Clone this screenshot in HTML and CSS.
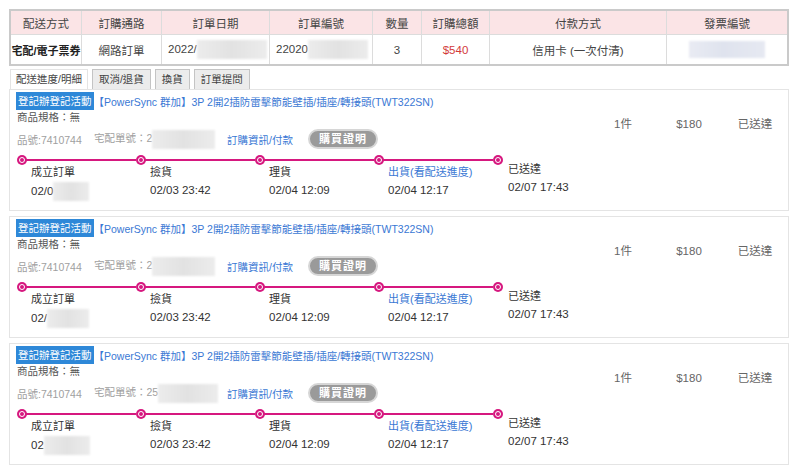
FILE: index.html
```html
<!DOCTYPE html>
<html lang="zh-Hant">
<head>
  <meta charset="UTF-8" />
  <title>訂單明細</title>
  <link rel="stylesheet" href="styles.css">
</head>
<body>
  <div class="page">
    <table class="summary">
      <tr>
        <th class="c1">配送方式</th>
        <th class="c2">訂購通路</th>
        <th class="c3">訂單日期</th>
        <th class="c4">訂單編號</th>
        <th class="c5">數量</th>
        <th class="c6">訂購總額</th>
        <th class="c7">付款方式</th>
        <th class="c8">發票編號</th>
      </tr>
      <tr>
        <td class="strong">宅配/電子票券</td>
        <td>網路訂單</td>
        <td class="left">2022/<span class="blur w70"></span></td>
        <td class="left">22020<span class="blur w60"></span></td>
        <td>3</td>
        <td class="price">$540</td>
        <td>信用卡 (一次付清)</td>
        <td><span class="blur invoice"></span></td>
      </tr>
    </table>

    <ul class="tabs">
      <li class="tab active">配送進度/明細</li>
      <li class="tab">取消/退貨</li>
      <li class="tab">換貨</li>
      <li class="tab">訂單提問</li>
    </ul>

    <div class="card">
      <div class="item">
        <div class="title"><span class="badge">登記辦登記活動</span><a class="name">【PowerSync 群加】3P 2開2插防雷擊節能壁插/插座/轉接頭(TWT322SN)</a></div>
        <div class="spec">商品規格：無</div>
        <div class="info">
          <span class="sku">品號:7410744</span>
          <span class="ship">宅配單號：2<span class="blur w63"></span></span>
          <a class="link">訂購資訊/付款</a>
          <span class="btn">購買證明</span>
        </div>
        <div class="steps">
          <div class="step"><div class="head"><i class="dot"></i><i class="seg"></i></div><div class="label">成立訂單</div><div class="time">02/0<span class="blur w36"></span></div></div>
          <div class="step"><div class="head"><i class="dot"></i><i class="seg"></i></div><div class="label">撿貨</div><div class="time">02/03 23:42</div></div>
          <div class="step"><div class="head"><i class="dot"></i><i class="seg"></i></div><div class="label">理貨</div><div class="time">02/04 12:09</div></div>
          <div class="step"><div class="head"><i class="dot"></i><i class="seg"></i></div><div class="label link">出貨(看配送進度)</div><div class="time">02/04 12:17</div></div>
          <div class="step last"><div class="head"><i class="dot"></i></div><div class="label">已送達</div><div class="time">02/07 17:43</div></div>
        </div>
      </div>
      <div class="meta"><span>1件</span><span>$180</span><span>已送達</span></div>
    </div>

    <div class="card">
      <div class="item">
        <div class="title"><span class="badge">登記辦登記活動</span><a class="name">【PowerSync 群加】3P 2開2插防雷擊節能壁插/插座/轉接頭(TWT322SN)</a></div>
        <div class="spec">商品規格：無</div>
        <div class="info">
          <span class="sku">品號:7410744</span>
          <span class="ship">宅配單號：2<span class="blur w63"></span></span>
          <a class="link">訂購資訊/付款</a>
          <span class="btn">購買證明</span>
        </div>
        <div class="steps">
          <div class="step"><div class="head"><i class="dot"></i><i class="seg"></i></div><div class="label">成立訂單</div><div class="time">02/<span class="blur w40"></span></div></div>
          <div class="step"><div class="head"><i class="dot"></i><i class="seg"></i></div><div class="label">撿貨</div><div class="time">02/03 23:42</div></div>
          <div class="step"><div class="head"><i class="dot"></i><i class="seg"></i></div><div class="label">理貨</div><div class="time">02/04 12:09</div></div>
          <div class="step"><div class="head"><i class="dot"></i><i class="seg"></i></div><div class="label link">出貨(看配送進度)</div><div class="time">02/04 12:17</div></div>
          <div class="step last"><div class="head"><i class="dot"></i></div><div class="label">已送達</div><div class="time">02/07 17:43</div></div>
        </div>
      </div>
      <div class="meta"><span>1件</span><span>$180</span><span>已送達</span></div>
    </div>

    <div class="card">
      <div class="item">
        <div class="title"><span class="badge">登記辦登記活動</span><a class="name">【PowerSync 群加】3P 2開2插防雷擊節能壁插/插座/轉接頭(TWT322SN)</a></div>
        <div class="spec">商品規格：無</div>
        <div class="info">
          <span class="sku">品號:7410744</span>
          <span class="ship">宅配單號：25<span class="blur w60"></span></span>
          <a class="link">訂購資訊/付款</a>
          <span class="btn">購買證明</span>
        </div>
        <div class="steps">
          <div class="step"><div class="head"><i class="dot"></i><i class="seg"></i></div><div class="label">成立訂單</div><div class="time">02<span class="blur w44"></span></div></div>
          <div class="step"><div class="head"><i class="dot"></i><i class="seg"></i></div><div class="label">撿貨</div><div class="time">02/03 23:42</div></div>
          <div class="step"><div class="head"><i class="dot"></i><i class="seg"></i></div><div class="label">理貨</div><div class="time">02/04 12:09</div></div>
          <div class="step"><div class="head"><i class="dot"></i><i class="seg"></i></div><div class="label link">出貨(看配送進度)</div><div class="time">02/04 12:17</div></div>
          <div class="step last"><div class="head"><i class="dot"></i></div><div class="label">已送達</div><div class="time">02/07 17:43</div></div>
        </div>
      </div>
      <div class="meta"><span>1件</span><span>$180</span><span>已送達</span></div>
    </div>
  </div>
</body>
</html>
```

FILE: styles.css
```css
body {
  margin: 0;
  background: #fff;
  color: #333;
  font-family: "Liberation Sans", "Noto Sans CJK TC", sans-serif;
  font-size: 12px;
}
.page {
  width: 780px;
  padding: 9px 0 0 9px;
}

/* top summary table */
.summary {
  width: 780px;
  border-collapse: collapse;
  border: 2px solid #cacaca;
  table-layout: fixed;
}
.summary th,
.summary td {
  border: 1px solid #dcdcdc;
  text-align: center;
  padding: 0;
  white-space: nowrap;
  overflow: hidden;
}
.summary th {
  height: 23px;
  background: #fbe4e6;
  font-weight: normal;
  font-size: 11.5px;
  color: #444;
}
.summary td {
  height: 29px;
  font-size: 11.5px;
  color: #444;
}
.c1 { width: 70px; }
.c2 { width: 79px; }
.c3 { width: 107px; }
.c4 { width: 102px; }
.c5 { width: 48px; }
.c6 { width: 67px; }
.c7 { width: 176px; }
.summary .strong {
  font-weight: bold;
  font-size: 11px;
  color: #222;
}
.summary .left {
  text-align: left;
  padding-left: 6px;
}
.summary .price {
  color: #d33a3a;
}

.blur {
  display: inline-block;
  vertical-align: middle;
  height: 19px;
  background: linear-gradient(90deg, #ececec, #e2e2e2 50%, #ececec);
  filter: blur(1px);
}
.w36 { width: 36px; }
.w40 { width: 42px; }
.w44 { width: 46px; }
.w60 { width: 60px; }
.w63 { width: 63px; }
.w70 { width: 70px; }
.blur.invoice {
  width: 76px;
  height: 17px;
  background: linear-gradient(90deg, #e9ebf3, #dfe3ee 45%, #e6e9f2);
}

/* tabs */
.tabs {
  display: flex;
  gap: 4px;
  list-style: none;
  margin: 3px 0 0 1px;
  padding: 0;
}
.tab {
  height: 19px;
  line-height: 19px;
  padding: 0 6px;
  font-size: 10.5px;
  color: #444;
  background: #ececec;
  border: 1px solid #c4c4c4;
  border-bottom: none;
}
.tab.active {
  background: #fff;
  border-color: #e4e4e4;
  padding: 0 5px;
}

/* product cards */
.card {
  display: flex;
  border: 1px solid #e4e4e4;
  margin-bottom: 5px;
  background: #fff;
}
.item {
  flex: 1;
  padding: 2px 0 12px 6px;
}
.title {
  height: 18px;
  display: flex;
  align-items: center;
  white-space: nowrap;
}
.badge {
  height: 18px;
  line-height: 18px;
  padding: 0 2px;
  background: #2e88d8;
  color: #fff;
  font-size: 10.5px;
}
.name {
  color: #3a78d4;
  font-size: 10.5px;
}
.spec {
  height: 14px;
  line-height: 14px;
  padding-left: 1px;
  font-size: 10.5px;
  color: #555;
}
.info {
  display: flex;
  align-items: center;
  height: 20px;
  margin-top: 5px;
  font-size: 10.5px;
  color: #a0a0a0;
}
.sku {
  width: 77px;
  padding-left: 1px;
}
.ship {
  width: 133px;
}
.link {
  color: #3a78d4;
}
.info .link {
  width: 81px;
}
.btn {
  width: 66px;
  height: 16px;
  line-height: 16px;
  text-align: center;
  color: #fff;
  background: #9a9a9a;
  border: 2px solid #d6d6d6;
  border-radius: 10px;
  letter-spacing: 1px;
  font-size: 11px;
  font-weight: bold;
}

/* delivery timeline */
.steps {
  display: flex;
  margin: 5px 0 0 1px;
}
.step {
  width: 119px;
}
.step.last {
  width: auto;
}
.head {
  display: flex;
  align-items: center;
  height: 11px;
}
.dot {
  width: 4px;
  height: 4px;
  border-radius: 50%;
  background: #d6187f;
  border: 1.5px solid #fff;
  box-shadow: 0 0 0 2px #d6187f;
  margin-left: 2px;
}
.seg {
  flex: 1;
  height: 2px;
  margin-left: 1px;
  background: #d6187f;
}
.label {
  padding-left: 14px;
  height: 14px;
  line-height: 14px;
  font-size: 11px;
  color: #333;
}
.label.link {
  color: #3a78d4;
}
.time {
  padding-left: 14px;
  margin-top: 3px;
  height: 16px;
  line-height: 16px;
  font-size: 11.5px;
  color: #333;
  white-space: nowrap;
}
.step.last .label,
.step.last .time {
  padding-left: 15px;
}
.step.last .label {
  margin-top: -3px;
}

.meta {
  display: flex;
  width: 198px;
  padding-top: 27px;
  align-items: flex-start;
}
.meta span {
  width: 66px;
  text-align: center;
  line-height: 14px;
  font-size: 11.5px;
  color: #666;
}
```
